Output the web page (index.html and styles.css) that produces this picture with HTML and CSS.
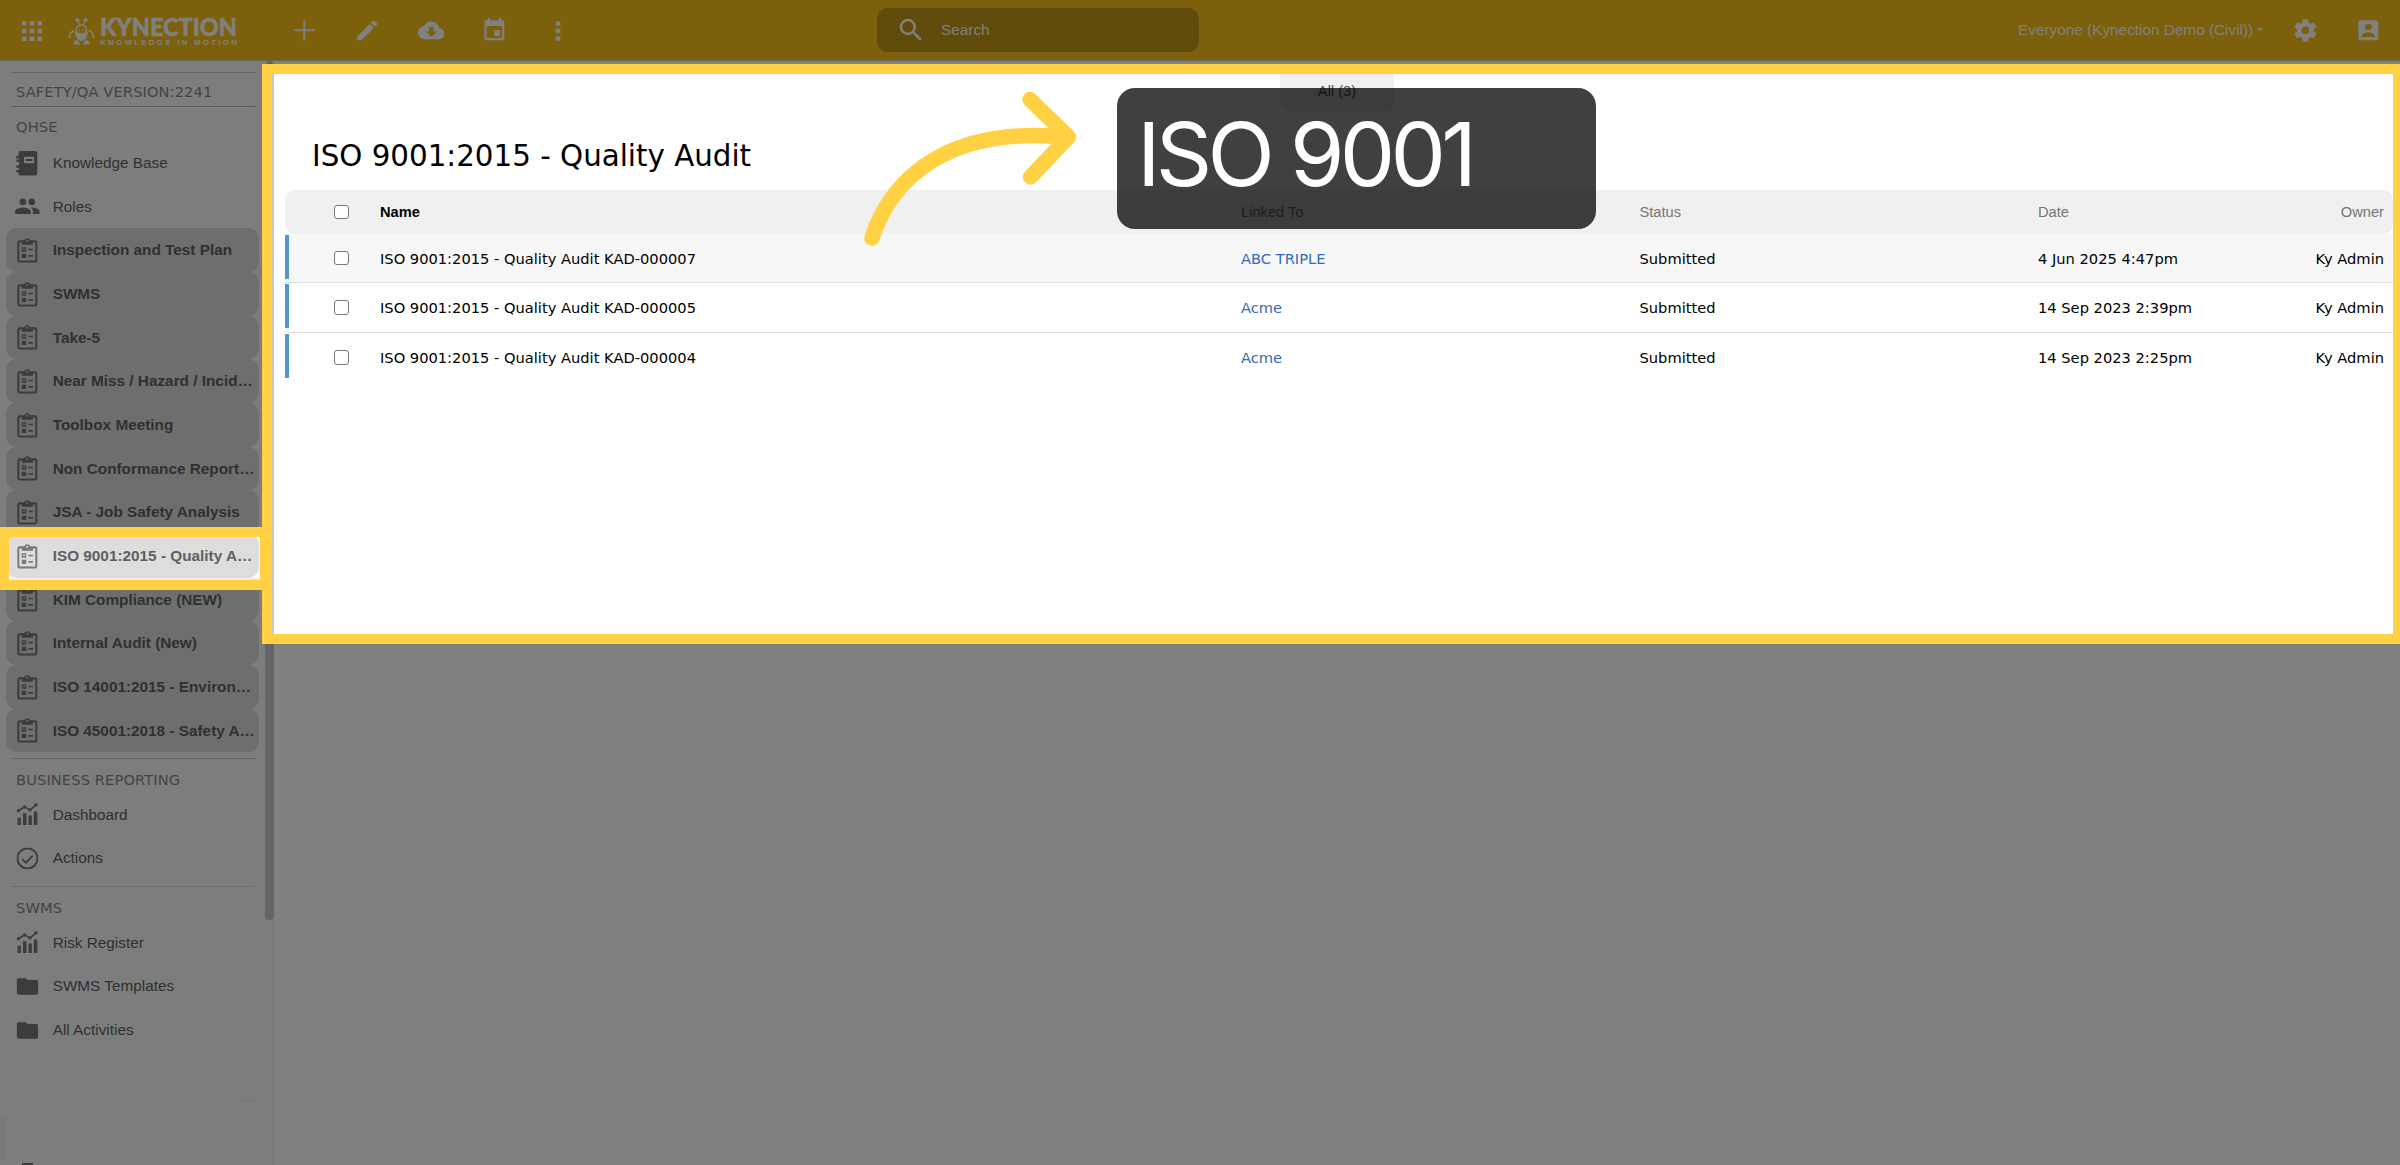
FILE: index.html
```html
<!DOCTYPE html>
<html lang="en">
<head>
  <meta charset="utf-8">
  <title>ISO 9001:2015 - Quality Audit</title>
  <link rel="stylesheet" href="styles.css">
</head>
<body>
  <svg class="sprite" width="0" height="0">
    <symbol id="i-apps" viewBox="0 0 24 24"><path d="M4 4h3.6v3.6H4zM10.2 4h3.6v3.6h-3.6zM16.4 4H20v3.6h-3.6zM4 10.2h3.6v3.6H4zM10.2 10.2h3.6v3.6h-3.6zM16.4 10.2H20v3.6h-3.6zM4 16.4h3.6V20H4zM10.2 16.4h3.6V20h-3.6zM16.4 16.4H20V20h-3.6z"/></symbol>
    <symbol id="i-add" viewBox="0 0 24 24"><path d="M11.1 3h1.8v8.1H21v1.8h-8.1V21h-1.8v-8.1H3v-1.8h8.1z"/></symbol>
    <symbol id="i-edit" viewBox="0 0 24 24"><path d="M3 17.25V21h3.75L17.81 9.94l-3.75-3.75L3 17.25zM20.71 7.04a1 1 0 0 0 0-1.41l-2.34-2.34a1 1 0 0 0-1.41 0l-1.83 1.83 3.75 3.75 1.83-1.83z"/></symbol>
    <symbol id="i-cloud" viewBox="0 0 24 24"><path d="M19.35 10.04A7.49 7.49 0 0 0 12 4C9.11 4 6.6 5.64 5.35 8.04A5.994 5.994 0 0 0 0 14c0 3.31 2.69 6 6 6h13c2.76 0 5-2.24 5-5 0-2.64-2.05-4.78-4.65-4.96zM17 13l-5 5-5-5h3V9h4v4h3z"/></symbol>
    <symbol id="i-event" viewBox="0 0 24 24"><path d="M17 12h-5v5h5v-5zM16 1v2H8V1H6v2H5a2 2 0 0 0-2 2v14a2 2 0 0 0 2 2h14a2 2 0 0 0 2-2V5a2 2 0 0 0-2-2h-1V1h-2zm3 18H5V8h14v11z"/></symbol>
    <symbol id="i-more" viewBox="0 0 24 24"><path d="M12 8a2 2 0 1 0 0-4 2 2 0 0 0 0 4zm0 2a2 2 0 1 0 0 4 2 2 0 0 0 0-4zm0 6a2 2 0 1 0 0 4 2 2 0 0 0 0-4z"/></symbol>
    <symbol id="i-search" viewBox="0 0 24 24"><path d="M15.5 14h-.79l-.28-.27A6.47 6.47 0 0 0 16 9.5 6.5 6.5 0 1 0 9.5 16c1.61 0 3.09-.59 4.23-1.57l.27.28v.79l5 4.99L20.49 19l-4.99-5zm-6 0C7.01 14 5 11.99 5 9.5S7.01 5 9.5 5 14 7.01 14 9.5 11.99 14 9.5 14z"/></symbol>
    <symbol id="i-gear" viewBox="0 0 24 24"><path d="M19.43 12.98c.04-.32.07-.64.07-.98s-.03-.66-.07-.98l2.11-1.65c.19-.15.24-.42.12-.64l-2-3.46c-.12-.22-.39-.3-.61-.22l-2.49 1c-.52-.4-1.08-.73-1.69-.98l-.38-2.65A.488.488 0 0 0 14 2h-4c-.25 0-.46.18-.49.42l-.38 2.65c-.61.25-1.17.59-1.69.98l-2.49-1c-.23-.09-.49 0-.61.22l-2 3.46c-.13.22-.07.49.12.64l2.11 1.65c-.04.32-.07.65-.07.98s.03.66.07.98l-2.11 1.65c-.19.15-.24.42-.12.64l2 3.46c.12.22.39.3.61.22l2.49-1c.52.4 1.08.73 1.69.98l.38 2.65c.03.24.24.42.49.42h4c.25 0 .46-.18.49-.42l.38-2.65c.61-.25 1.17-.59 1.69-.98l2.49 1c.23.09.49 0 .61-.22l2-3.46c.12-.22.07-.49-.12-.64l-2.11-1.65zM12 15.5a3.5 3.5 0 1 1 0-7 3.5 3.5 0 0 1 0 7z"/></symbol>
    <symbol id="i-account" viewBox="0 0 24 24"><path d="M3 5v14a2 2 0 0 0 2 2h14a2 2 0 0 0 2-2V5a2 2 0 0 0-2-2H5a2 2 0 0 0-2 2zm12 4a3 3 0 1 1-6 0 3 3 0 0 1 6 0zm-9 8c0-2 4-3.100 6-3.100s6 1.100 6 3.100v1H6v-1z"/></symbol>
    <symbol id="i-book" viewBox="0 0 24 24"><path fill-rule="evenodd" d="M6 1h13a2 2 0 0 1 2 2v18a2 2 0 0 1-2 2H6a2 2 0 0 1-2-2v-1H2v-2h2.500v-2H2v-2h2.500v-3.500H2v-2h2.500V7.500H2v-2h2V3a2 2 0 0 1 2-2zM9 6v6h9V6zM10.500 8h6v2h-6z"/></symbol>
    <symbol id="i-people" viewBox="0 0 24 24"><path d="M16 11a3 3 0 1 0 0-6 3 3 0 0 0 0 6zm-8 0a3 3 0 1 0 0-6 3 3 0 0 0 0 6zm0 2c-2.330 0-7 1.170-7 3.500V19h14v-2.500c0-2.330-4.670-3.500-7-3.500zm8 0c-.29 0-.62.02-.97.05 1.160.84 1.970 1.970 1.970 3.450V19h6v-2.500c0-2.330-4.670-3.500-7-3.500z"/></symbol>
    <symbol id="i-clip" viewBox="0 0 24 24"><path fill-rule="evenodd" d="M5 3h4.200a3 3 0 0 1 5.600 0H19a2 2 0 0 1 2 2v16a2 2 0 0 1-2 2H5a2 2 0 0 1-2-2V5a2 2 0 0 1 2-2zM4.800 5v16.200h14.400V5H17v2H7V5zM12 2.500a.9.9 0 1 0 0 1.800.9.9 0 0 0 0-1.800zM7 9.200h4v4H7zM8.200 10.400v1.600h1.600v-1.600zM7 15h4v4H7zM13 10.500h4V12h-4zM13 16.300h4v1.500h-4z"/></symbol>
    <symbol id="i-chart" viewBox="0 0 24 24"><path d="M3.200 15h3v6.500h-3zM8.100 11h3.100v10.500H8.100zM13 13h3.100v8.500H13zM17.900 9.500H21v12h-3.100z"/><path d="M4 8.800L9.500 5.300l5 2.700 5.500-4.800" fill="none" stroke="currentColor" stroke-width="1.500"/><circle cx="4" cy="8.800" r="1.500"/><circle cx="9.500" cy="5.300" r="1.500"/><circle cx="14.500" cy="8" r="1.500"/><circle cx="19.800" cy="3.300" r="1.500"/></symbol>
    <symbol id="i-check" viewBox="0 0 24 24"><circle cx="12" cy="12" r="11" fill="none" stroke="currentColor" stroke-width="2"/><path d="M6.500 12.700l4 3.900 7.300-7.700" fill="none" stroke="currentColor" stroke-width="2"/></symbol>
    <symbol id="i-folder" viewBox="0 0 24 24"><path d="M10 3H2.200A2 2 0 0 0 .2 5v14a2 2 0 0 0 2 2h19.600a2 2 0 0 0 2-2V7a2 2 0 0 0-2-2H12z"/></symbol>
  </svg>

  <header class="topbar">
    <svg class="icon lg apps"><use href="#i-apps"/></svg>
    <svg class="logo" viewBox="0 0 170 30">
      <g class="mascot" fill="none" stroke="currentColor" stroke-width="1.400">
        <path d="M9.500 3.500l2.500 6M17.500 3.500L15 9.500M6 14.500C3 16 1.500 18 1.500 21M21 14.500c3 1.500 4.500 3.500 4.500 6.500"/>
        <circle cx="13.500" cy="14" r="5"/>
        <path fill="currentColor" stroke="none" d="M7 15c1.500 3 11.500 3 13 0 0 6-3 10-6.500 10S7 21 7 15zM7.500 4a2 2 0 1 1 4 0 2 2 0 0 1-4 0zM15.500 4a2 2 0 1 1 4 0 2 2 0 0 1-4 0zM5.500 28.500c0-3 2-5 4-4.500l3 4.500zM21.500 28.500c0-3-2-5-4-4.500l-3 4.500zM0 22l1.500-3L3 22zM24 22l1.500-3 1.500 3z"/>
        <path d="M11 14h1M15 14h1"/>
      </g>
      <text class="brand" x="32" y="20" textLength="137" lengthAdjust="spacingAndGlyphs">KYNECTION</text>
      <text class="motto" x="32" y="28.500" textLength="137">KNOWLEDGE IN MOTION</text>
    </svg>
    <nav class="tools">
      <svg class="icon"><use href="#i-add"/></svg>
      <svg class="icon"><use href="#i-edit"/></svg>
      <svg class="icon"><use href="#i-cloud"/></svg>
      <svg class="icon"><use href="#i-event"/></svg>
      <svg class="icon lg"><use href="#i-more"/></svg>
    </nav>
    <div class="search">
      <svg class="icon lg"><use href="#i-search"/></svg>
      <span>Search</span>
    </div>
    <div class="account">
      <span>Everyone (Kynection Demo (Civil))</span>
      <i class="caret"></i>
      <svg class="icon"><use href="#i-gear"/></svg>
      <svg class="icon"><use href="#i-account"/></svg>
    </div>
  </header>

  <div class="layout">
    <aside class="sidebar">
      <div class="menu">
        <h4 class="version">SAFETY/QA VERSION:2241</h4>
        <h4 class="first">QHSE</h4>
        <a class="item"><svg class="icon"><use href="#i-book"/></svg>Knowledge Base</a>
        <a class="item"><svg class="icon"><use href="#i-people"/></svg>Roles</a>
        <a class="item form"><svg class="icon"><use href="#i-clip"/></svg>Inspection and Test Plan</a>
        <a class="item form"><svg class="icon"><use href="#i-clip"/></svg>SWMS</a>
        <a class="item form"><svg class="icon"><use href="#i-clip"/></svg>Take-5</a>
        <a class="item form"><svg class="icon"><use href="#i-clip"/></svg>Near Miss / Hazard / Incid…</a>
        <a class="item form"><svg class="icon"><use href="#i-clip"/></svg>Toolbox Meeting</a>
        <a class="item form"><svg class="icon"><use href="#i-clip"/></svg>Non Conformance Report…</a>
        <a class="item form"><svg class="icon"><use href="#i-clip"/></svg>JSA - Job Safety Analysis</a>
        <div class="active"><a class="item form"><svg class="icon"><use href="#i-clip"/></svg>ISO 9001:2015 - Quality A…</a></div>
        <a class="item form"><svg class="icon"><use href="#i-clip"/></svg>KIM Compliance (NEW)</a>
        <a class="item form"><svg class="icon"><use href="#i-clip"/></svg>Internal Audit (New)</a>
        <a class="item form"><svg class="icon"><use href="#i-clip"/></svg>ISO 14001:2015 - Environ…</a>
        <a class="item form"><svg class="icon"><use href="#i-clip"/></svg>ISO 45001:2018 - Safety A…</a>
        <h4 class="group">BUSINESS REPORTING</h4>
        <a class="item"><svg class="icon"><use href="#i-chart"/></svg>Dashboard</a>
        <a class="item"><svg class="icon"><use href="#i-check"/></svg>Actions</a>
        <h4 class="group light">SWMS</h4>
        <a class="item"><svg class="icon"><use href="#i-chart"/></svg>Risk Register</a>
        <a class="item"><svg class="icon"><use href="#i-folder"/></svg>SWMS Templates</a>
        <a class="item"><svg class="icon"><use href="#i-folder"/></svg>All Activities</a>
        <div class="dash"></div>
        <div class="stub"></div>
        <div class="cut"></div>
      </div>
      <div class="scroll"><i class="up"></i><div class="thumb"></div></div>
    </aside>

    <main>
      <section class="panel">
        <div class="tab">All (3)</div>
        <h1>ISO 9001:2015 - Quality Audit</h1>
        <div class="row head">
          <input type="checkbox"><b>Name</b><span>Linked To</span><span>Status</span><span>Date</span><span class="owner">Owner</span>
        </div>
        <div class="row hover">
          <input type="checkbox"><span>ISO 9001:2015 - Quality Audit KAD-000007</span><a>ABC TRIPLE</a><span>Submitted</span><span>4 Jun 2025 4:47pm</span><span class="owner">Ky Admin</span>
        </div>
        <div class="row">
          <input type="checkbox"><span>ISO 9001:2015 - Quality Audit KAD-000005</span><a>Acme</a><span>Submitted</span><span>14 Sep 2023 2:39pm</span><span class="owner">Ky Admin</span>
        </div>
        <div class="row">
          <input type="checkbox"><span>ISO 9001:2015 - Quality Audit KAD-000004</span><a>Acme</a><span>Submitted</span><span>14 Sep 2023 2:25pm</span><span class="owner">Ky Admin</span>
        </div>
      </section>
    </main>
  </div>

  <!-- callouts drawn over the page -->
  <div class="frame frame-main"></div>
  <div class="frame frame-item"></div>
  <svg class="arrow" viewBox="0 0 240 175">
    <path d="M22 158C42 97 100 45 218 57.500M180 19.500L218.500 57 180.500 97"/>
  </svg>
  <div class="callout">ISO 9001</div>
</body>
</html>
```
FILE: styles.css
```css
* {
  box-sizing: border-box;
}
body {
  margin: 0;
  height: 1165px;
  overflow: hidden;
  position: relative;
  background: #808080;
  font-family: "Liberation Sans", Arial, sans-serif;
  font-size: 15.33px;
  color: #000;
}
.sprite {
  position: absolute;
}
.icon {
  width: 26.67px;
  height: 26.67px;
  flex: none;
  fill: currentColor;
}
.icon.lg {
  width: 30px;
  height: 30px;
}

/* top bar */
.topbar {
  display: flex;
  align-items: center;
  height: 61px;
  background: #7c600c;
  border-bottom: 1px solid #666;
  color: #808080;
  padding: 1px 18px 0 17px;
}
.logo {
  width: 170px;
  height: 30px;
  margin-left: 21px;
  flex: none;
  fill: currentColor;
  overflow: visible;
}
.brand {
  font: 900 25px Lato, sans-serif;
  stroke: currentColor;
  stroke-width: 0.6px;
}
.motto {
  font: bold 8px "Liberation Sans", Arial, sans-serif;
}
.tools {
  display: flex;
  align-items: center;
  gap: 36.6px;
  margin-left: 53px;
}
.tools .lg {
  margin-left: -1px;
}
.search {
  display: flex;
  align-items: center;
  width: 322px;
  height: 44px;
  margin-left: 304px;
  margin-bottom: 1px;
  padding-left: 19px;
  background: #614b0a;
  border-radius: 11px;
}
.search span {
  margin-left: 15px;
}
.account {
  display: flex;
  align-items: center;
  margin-left: auto;
}
.account span {
  margin-top: -2px;
}
.account .icon + .icon {
  margin-left: 36.5px;
}
.caret {
  border: 3px solid transparent;
  border-top-color: #808080;
  border-bottom: 0;
  margin: 0 29px 3px 4px;
}

/* sidebar */
.layout {
  display: flex;
  height: 1104px;
}
.sidebar {
  display: flex;
  width: 274px;
  background: #7d7d7d;
  color: #303030;
}
.menu {
  width: 265px;
  padding: 11px 5px 0 6px;
  flex: none;
}
.menu h4 {
  margin: 0 5px;
  padding-left: 5px;
  font: 14.67px "DejaVu Sans", Verdana, sans-serif;
  letter-spacing: 0.1px;
  color: #444;
}
.menu .version {
  height: 35px;
  line-height: 38px;
  border-top: 1px solid #666;
  border-bottom: 1px solid #5c5c5c;
}
.menu .first {
  height: 34px;
  line-height: 40px;
}
.menu .group {
  height: 35px;
  line-height: 41px;
  margin-top: 5.5px;
  border-top: 1px solid #636363;
}
.menu .light {
  border-top-color: #6e6e6e;
}
.item {
  display: flex;
  align-items: center;
  gap: 12px;
  height: 43.68px;
  width: 253px;
  padding-left: 8px;
  border-radius: 11px;
  white-space: nowrap;
}
.item .icon {
  color: #3c3c3c;
}
.item use[href="#i-check"],
.item use[href="#i-folder"] {
  transform: translate(2.5px, 2.5px) scale(0.82);
}
.form {
  background: #6e6e6e;
  font-weight: bold;
}
.active {
  position: relative;
  width: 253.5px;
  background: #fff;
  box-shadow: 0 2px 0 #eee;
}
.active .item {
  background: #ddd;
  color: #606060;
}
.active .icon {
  color: #797979;
}
.dash {
  width: 12px;
  height: 2px;
  margin: 48px 0 0 236px;
  background: #757575;
}
.stub {
  width: 7px;
  height: 44px;
  margin: 14px 0 0 -6px;
  background: #787878;
}
.cut {
  width: 11px;
  height: 2px;
  margin: 3px 0 0 16px;
  background: #3c3c3c;
}
.scroll {
  width: 9px;
  border-right: 1px solid #757575;
}
.up {
  display: block;
  width: 9px;
  height: 4px;
  background: #606060;
  clip-path: polygon(35% 0, 65% 0, 100% 100%, 0 100%);
}
.thumb {
  width: 9px;
  height: 855px;
  background: #656565;
  border-radius: 4px;
}

/* audit list */
main {
  flex: 1;
  padding: 3px 7px 0 0;
}
.panel {
  height: 580px;
  padding: 10px 0 0 11px;
  background: #fff;
  font-family: "DejaVu Sans", Verdana, sans-serif;
  font-size: 14.67px;
}
.tab {
  width: 114px;
  height: 38px;
  margin-left: 995px;
  line-height: 35px;
  text-align: center;
  background: #f0f0f0;
  border-radius: 0 0 11px 11px;
  font-family: "Liberation Sans", Arial, sans-serif;
  color: #555;
}
h1 {
  margin: 0;
  height: 78px;
  padding-left: 27px;
  line-height: 89px;
  font-size: 29.33px;
  font-weight: normal;
}
.row {
  display: grid;
  grid-template-columns: 95px 861px 398.5px 398.5px 1fr 97px;
  align-items: center;
  height: 49.7px;
  padding-right: 9px;
  border-bottom: 1px solid #e2e2e2;
  position: relative;
}
.row .owner {
  text-align: right;
}
.row::before {
  content: "";
  position: absolute;
  left: 0;
  top: 1px;
  width: 4px;
  height: 44px;
  background: #5793d9;
}
.row:last-child {
  border-bottom: 0;
}
.head {
  height: 44px;
  border: 0;
  border-radius: 11px;
  background: #f0f0f0;
  color: #757575;
  font-family: "Liberation Sans", Arial, sans-serif;
  font-size: 14.67px;
}
.head::before {
  display: none;
}
.head b {
  color: #000;
}
.hover {
  height: 49px;
  background: #f7f7f7;
}
.row a {
  color: #346ab8;
}
.row input {
  appearance: none;
  width: 14.5px;
  height: 14.5px;
  margin: 0 0 0 49px;
  border: 1px solid #767676;
  border-radius: 3px;
  background: #fff;
}

/* callouts */
.frame {
  position: absolute;
  border: 10px solid #ffd143;
}
.frame-main {
  left: 262px;
  top: 64px;
  width: 2141px;
  height: 580px;
  box-shadow: inset 2px 0 0 #c8c8c8;
}
.frame-item {
  left: -1px;
  top: 527px;
  width: 271px;
  height: 63px;
}
.arrow {
  position: absolute;
  left: 850px;
  top: 80px;
  width: 240px;
  height: 175px;
  fill: none;
  stroke: #ffd143;
  stroke-width: 15.5;
  stroke-linecap: round;
  stroke-linejoin: round;
}
.callout {
  position: absolute;
  left: 1117px;
  top: 88px;
  width: 479px;
  height: 141px;
  padding-left: 20px;
  border-radius: 18px;
  background: rgba(0, 0, 0, 0.75);
  color: #fff;
  font: 88px/132px Inter, sans-serif;
  letter-spacing: -4.8px;
}
```
